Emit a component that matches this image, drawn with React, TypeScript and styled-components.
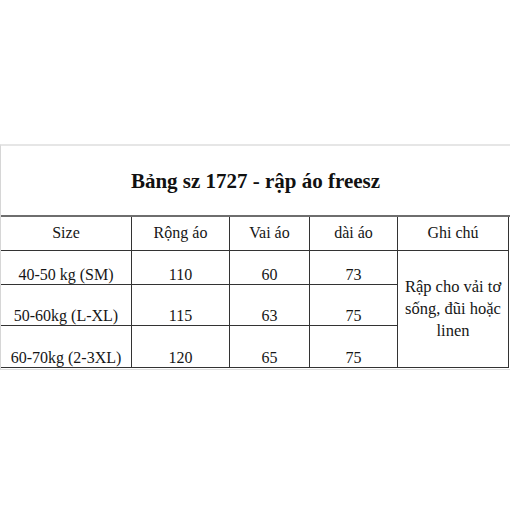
import styled, { createGlobalStyle } from 'styled-components'

const Global = createGlobalStyle`
	body {
		margin: 0;
		background: #fff;
		font-family: "Liberation Serif", "Times New Roman", serif;
		color: #161616;
	}
`

const Page = styled.div`
	width: 510px;
	height: 510px;
	padding-top: 144px;
	box-sizing: border-box;
	background: #fff;
`

const Sheet = styled.div`
	width: 509px;
	border-top: 2px solid #e6e6e6;
	border-left: 1px solid #d6d6d6;
	border-bottom: 1px solid #dedede;
	padding-bottom: 1px;
`

const Title = styled.h1`
	margin: 0;
	height: 69px;
	display: flex;
	align-items: center;
	justify-content: center;
	padding-top: 2px;
	box-sizing: border-box;
	font-size: 21px;
	font-weight: bold;
	color: #111;
`

const Grid = styled.div`
	display: grid;
	grid-template-columns: 131px 98px 80px 88px 111px;
	grid-template-rows: 34px 34px 41px 42px;
	border-top: 2px solid #6e6e6e;
`

const Cell = styled.div<{ $head?: boolean }>`
	display: flex;
	justify-content: center;
	align-items: ${p => (p.$head ? 'center' : 'flex-end')};
	border-right: 1px solid #333;
	border-bottom: 1px solid #333;
	font-size: 16px;
	line-height: 18px;
	white-space: nowrap;
	padding-bottom: ${p => (p.$head ? '1px' : '0')};
`

const Note = styled.div`
	grid-column: 5;
	grid-row: 2 / span 3;
	display: flex;
	align-items: center;
	justify-content: center;
	text-align: center;
	border-right: 1px solid #333;
	border-bottom: 1px solid #333;
	font-size: 16.5px;
	line-height: 22px;
	padding-bottom: 1px;
`

const headers = ['Size', 'Rộng áo', 'Vai áo', 'dài áo', 'Ghi chú']

const rows = [
	['40-50 kg (SM)', '110', '60', '73'],
	['50-60kg (L-XL)', '115', '63', '75'],
	['60-70kg (2-3XL)', '120', '65', '75'],
]

export default function App() {
	return (
		<Page>
			<Global />
			<Sheet>
				<Title>Bảng sz 1727 - rập áo freesz</Title>
				<Grid>
					{headers.map(h => (
						<Cell key={h} $head>
							{h}
						</Cell>
					))}
					{rows.flatMap((r, i) =>
						r.map((v, j) => (
							<Cell key={i + '-' + j} style={{ gridRow: i + 2, gridColumn: j + 1 }}>
								{v}
							</Cell>
						))
					)}
					<Note>
						Rập cho vải tơ
						<br />
						sống, đũi hoặc
						<br />
						linen
					</Note>
				</Grid>
			</Sheet>
		</Page>
	)
}
